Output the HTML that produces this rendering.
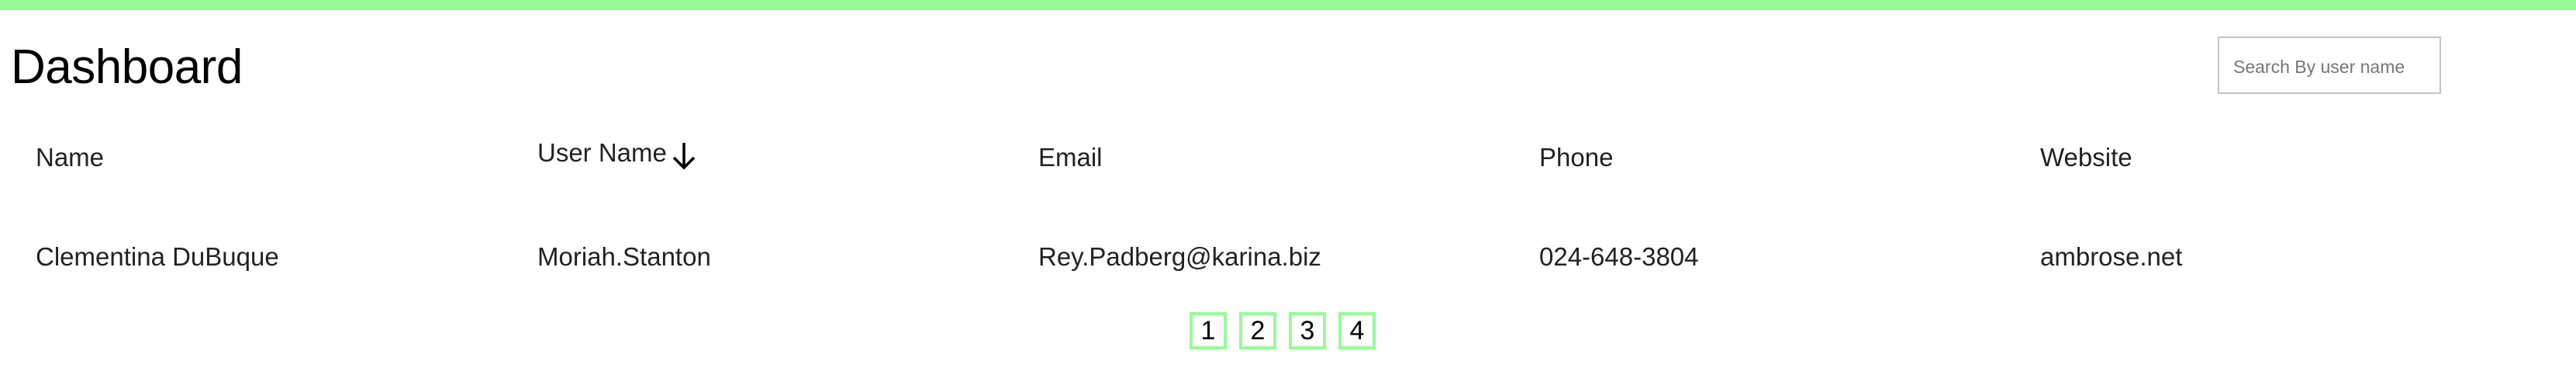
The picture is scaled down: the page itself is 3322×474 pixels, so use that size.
<!DOCTYPE html>
<html><head><meta charset="utf-8"><style>
html,body{margin:0;padding:0;width:3322px;height:474px;background:#fff;overflow:hidden;font-family:"Liberation Sans",sans-serif;}
.bar{position:absolute;left:0;top:0;width:3322px;height:13px;background:#98fb98;}
.title{position:absolute;left:14px;top:47px;font-size:62px;color:#000;line-height:80px;letter-spacing:-0.5px;}
.search{position:absolute;left:2860px;top:47px;width:284px;height:70px;border:2px solid #c4c4c4;box-sizing:content-box;}
.search span{position:absolute;left:18px;top:24px;font-size:23px;color:#767676;}
.t{position:absolute;font-size:33px;color:#222;white-space:nowrap;line-height:40px;}
.pg{position:absolute;top:402px;width:40px;height:40px;border:4px solid #98fb98;font-size:34px;line-height:40px;text-align:center;color:#000;}
</style></head><body>
<div class="bar"></div>
<div class="title">Dashboard</div>
<div class="search"><span>Search By user name</span></div>
<div class="t" style="left:46px;top:183px">Name</div>
<div class="t" style="left:693px;top:177px">User Name</div>
<svg style="position:absolute;left:864px;top:181px" width="36" height="40" viewBox="0 0 36 40"><path d="M18 3V35M5 22L18 35L31 22" stroke="#000" stroke-width="3.5" fill="none"/></svg>
<div class="t" style="left:1339px;top:183px">Email</div>
<div class="t" style="left:1985px;top:183px">Phone</div>
<div class="t" style="left:2631px;top:183px">Website</div>
<div class="t" style="left:46px;top:311px">Clementina DuBuque</div>
<div class="t" style="left:693px;top:311px">Moriah.Stanton</div>
<div class="t" style="left:1339px;top:311px">Rey.Padberg@karina.biz</div>
<div class="t" style="left:1985px;top:311px">024-648-3804</div>
<div class="t" style="left:2631px;top:311px">ambrose.net</div>
<div class="pg" style="left:1534px">1</div>
<div class="pg" style="left:1598px">2</div>
<div class="pg" style="left:1662px">3</div>
<div class="pg" style="left:1726px">4</div>
</body></html>
